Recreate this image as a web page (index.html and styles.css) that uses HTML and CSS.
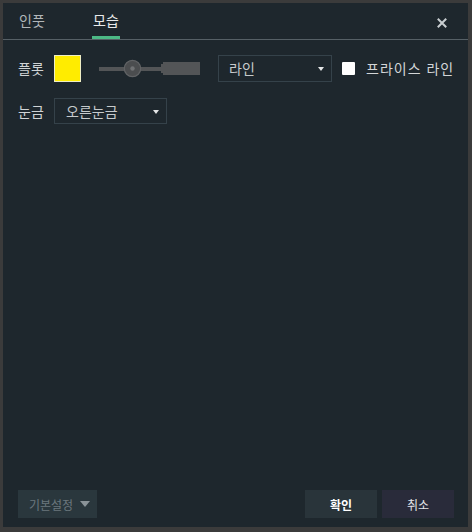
FILE: index.html
```html
<!DOCTYPE html>
<html lang="ko">
<head>
<meta charset="utf-8">
<title>설정</title>
<link rel="stylesheet" href="styles.css">
</head>
<body>
<div class="dialog">
  <div class="tabs">
    <div class="tab">인풋</div>
    <div class="tab active">모습</div>
    <div class="close">
      <svg width="10" height="10" viewBox="0 0 10 10"><path d="M1.5 1.5L8.5 8.5M8.5 1.5L1.5 8.5" stroke="#c9ced1" stroke-width="2" stroke-linecap="square"/></svg>
    </div>
  </div>
  <div class="content">
    <div class="row row-plot">
      <span class="label">플롯</span>
      <span class="swatch"></span>
      <svg class="slider" width="101" height="27" viewBox="0 0 101 27">
        <rect x="0" y="12" width="64" height="4" fill="#535557"/>
        <rect x="62" y="9" width="3" height="9" fill="#535557"/>
        <rect x="64" y="7" width="37" height="13" fill="#535557"/>
        <circle cx="33.5" cy="13.5" r="8.2" fill="#4b4d4f" stroke="#616365" stroke-width="1.2"/>
        <circle cx="33.5" cy="13.5" r="2.2" fill="#707274"/>
      </svg>
      <div class="select select-line"><span>라인</span><span class="caret"></span></div>
      <span class="checkbox"></span>
      <span class="check-label">프라이스 라인</span>
    </div>
    <div class="row row-scale">
      <span class="label">눈금</span>
      <div class="select select-scale"><span>오른눈금</span><span class="caret"></span></div>
    </div>
  </div>
  <div class="footer">
    <button class="btn btn-preset">기본설정<span class="caret-lg"></span></button>
    <button class="btn btn-ok">확인</button>
    <button class="btn btn-cancel">취소</button>
  </div>
</div>
</body>
</html>
```
FILE: styles.css
```css
* { box-sizing: border-box; }
html, body { margin: 0; padding: 0; }
body {
  background: #3b3b3b;
  width: 472px;
  height: 532px;
  overflow: hidden;
  font-family: "Noto Sans CJK KR", "Noto Sans", sans-serif;
}
.dialog {
  margin: 3px 0 0 3px;
  width: 465px;
  height: 524px;
  background: #1e272d;
  display: flex;
  flex-direction: column;
}
.tabs {
  height: 37px;
  border-bottom: 1px solid #566066;
  display: flex;
  align-items: stretch;
  padding: 0 21px 0 15px;
}
.tab {
  width: 28px;
  display: flex;
  align-items: center;
  justify-content: center;
  font-size: 14px;
  color: #b1b6b9;
  border-bottom: 3px solid transparent;
  padding-top: 1px;
  white-space: nowrap;
}
.tab.active {
  margin-left: 46px;
  color: #e8eaeb;
  border-bottom-color: #4cb985;
}
.close {
  margin-left: auto;
  display: flex;
  align-items: center;
  padding-top: 5px;
  padding-bottom: 2px;
}
.close svg { display: block; }
.content {
  flex: 1;
  padding: 14px 0 0 15px;
}
.row {
  display: flex;
  align-items: center;
}
.row-plot { height: 28px; }
.row-scale { height: 26px; margin-top: 16px; }
.label {
  width: 28px;
  font-size: 14px;
  color: #cfd3d5;
  white-space: nowrap;
}
.swatch {
  margin-left: 8px;
  width: 27px;
  height: 27px;
  background: #ffec00;
  border: 1px solid #efeec4;
}
.slider {
  margin-left: 18px;
  display: block;
}
.select {
  height: 27px;
  border: 1px solid #35424a;
  display: flex;
  align-items: center;
  justify-content: space-between;
  font-size: 14px;
  color: #c6cacc;
  padding: 0 7px 0 10px;
}
.select-line { margin-left: 18px; width: 114px; }
.select-scale { margin-left: 8px; width: 113px; height: 26px; padding-left: 11px; }
.caret {
  width: 0;
  height: 0;
  border-left: 3.5px solid transparent;
  border-right: 3.5px solid transparent;
  border-top: 4px solid #e4e6e7;
  margin-top: 1px;
}
.checkbox {
  margin-left: 10px;
  width: 13px;
  height: 13px;
  background: #ffffff;
  border-radius: 1px;
}
.check-label {
  margin-left: 11px;
  font-size: 14px;
  letter-spacing: 1px;
  color: #d3d6d8;
  white-space: nowrap;
}
.footer {
  display: flex;
  align-items: center;
  padding: 0 14px 9px 15px;
}
.btn {
  height: 28px;
  border: none;
  font-family: "Noto Sans CJK KR", "Noto Sans", sans-serif;
  font-size: 12px;
  padding: 0;
  display: flex;
  align-items: center;
  justify-content: center;
}
.btn-preset {
  width: 79px;
  background: #2a373d;
  color: #6c787e;
  justify-content: flex-start;
  padding-left: 11px;
}
.caret-lg {
  width: 0;
  height: 0;
  border-left: 5px solid transparent;
  border-right: 5px solid transparent;
  border-top: 6px solid #8a9398;
  margin-left: 7px;
}
.btn-ok {
  margin-left: auto;
  width: 72px;
  background: #29343a;
  color: #ffffff;
  font-weight: bold;
}
.btn-cancel {
  margin-left: 5px;
  width: 72px;
  background: #292b3a;
  color: #e3e4e8;
}
```
